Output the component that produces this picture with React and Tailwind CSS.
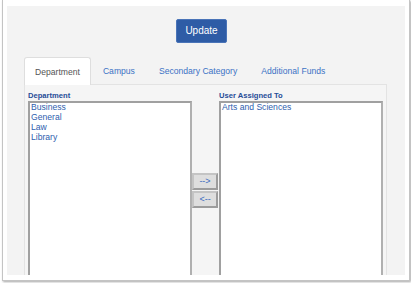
import React from "react";

const tabs = ["Department", "Campus", "Secondary Category", "Additional Funds"];
const departments = ["Business", "General", "Law", "Library"];
const assigned = ["Arts and Sciences"];

const ListBox = ({ items }) => (
  <div className="w-[164px] h-[178px] bg-white border-2 border-[#b0b0b0] border-t-[#a0a0a0] border-l-[#a0a0a0] pl-[1px] leading-[10px] text-[8.6px] text-[#2d5eae]">
    <div className="-mt-[1px]">
      {items.map((item) => (
        <div key={item}>{item}</div>
      ))}
    </div>
  </div>
);

export default function App() {
  return (
    <div className="w-[411px] h-[283px] bg-white overflow-hidden font-['Liberation_Sans',Arial,sans-serif]">
      {/* screenshot frame */}
      <div className="ml-[2px] w-[408px] h-[281px] bg-white border-x border-b border-[#c4c4c4] shadow-[1px_1px_2px_rgba(0,0,0,0.35)] px-[4px] pt-[6px]">
        <div className="h-[269px] bg-[#f3f3f3] overflow-hidden">
          <div className="pt-[11px] pl-[169px]">
            <button className="w-[51px] h-[24px] bg-[#2e5ca6] border border-[#4a74b8] rounded-[2px] text-white text-[10px] leading-none">
              Update
            </button>
          </div>

          {/* tabs */}
          <div className="mt-[14px] ml-[17px] flex h-[27px] text-[8.6px]">
            {tabs.map((t, i) => (
              <div
                key={t}
                className={
                  i === 0
                    ? "px-[10px] pt-px flex items-center bg-white border border-b-0 border-[#dedede] rounded-t-[3px] text-[#555] relative -mb-px h-[28px]"
                    : "px-[11px] pt-px flex items-center text-[#3b72c5] border border-transparent"
                }
              >
                {t}
              </div>
            ))}
          </div>

          {/* panel */}
          <div className="ml-[17px] w-[363px] h-[200px] border border-[#e3e3e3] bg-[#f5f5f5] px-[3px] pt-[5px]">
            <div className="flex text-[7.6px] font-bold text-[#274d98] leading-[11px]">
              <div className="w-[191px]">Department</div>
              <div>User Assigned To</div>
            </div>
            <div className="flex items-center">
              <ListBox items={departments} />
              <div className="w-[27px] flex flex-col gap-[1px]">
                <button className="w-[26px] h-[17px] bg-[#dedede] border-2 border-[#9c9c9c] border-t-[#c4c4c4] border-l-[#c4c4c4] text-[9px] text-[#3b6cc0] leading-none">
                  --&gt;
                </button>
                <button className="w-[26px] h-[17px] bg-[#dedede] border-2 border-[#9c9c9c] border-t-[#c4c4c4] border-l-[#c4c4c4] text-[9px] text-[#3b6cc0] leading-none">
                  &lt;--
                </button>
              </div>
              <ListBox items={assigned} />
            </div>
          </div>
        </div>
      </div>
    </div>
  );
}
